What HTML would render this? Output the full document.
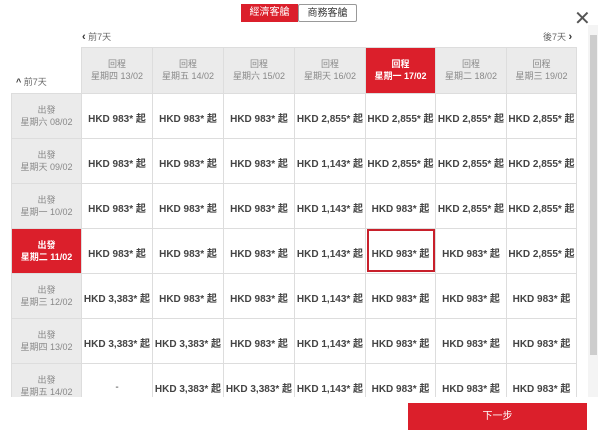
<!DOCTYPE html><html><head><meta charset="utf-8"><style>
body{margin:0;width:600px;height:441px;background:#fff;font-family:"Liberation Sans","Noto Sans CJK TC",sans-serif;position:relative;overflow:hidden;color:#333}
.tab{position:absolute;top:4px;height:18px;font-size:10px;line-height:18px;text-align:center;box-sizing:border-box}
.scroll{position:absolute;left:0;top:25px;width:588px;height:372px;overflow:hidden}
table{position:absolute;left:11px;top:22px;border-collapse:collapse;table-layout:fixed}
td{border:1px solid #ddd;height:40px;text-align:center;font-size:10px;font-weight:bold;color:#444;padding:4px 0 0;white-space:nowrap}
td.h{background:#ebebeb;font-weight:normal;color:#888;font-size:9px;line-height:12px;padding:0}
td.r{background:#db1f2b;color:#fff}
td.sel{outline:2px solid #c8202b;outline-offset:-3px}
td.e{border:none;background:transparent;padding:0}
</style></head><body>
<div class="tab" style="left:241px;width:57px;background:#db1f2b;color:#fff">經濟客艙</div>
<div class="tab" style="left:298px;width:59px;border:1px solid #999;color:#333;border-radius:2px">商務客艙</div>
<div style="position:absolute;left:574px;top:6px;font-size:20px;color:#555;font-weight:300">✕</div>
<div class="scroll">
<div style="position:absolute;left:82px;top:5px;font-size:9px;color:#666"><b style="font-size:11px;color:#333">‹</b> 前7天</div>
<div style="position:absolute;left:543px;top:5px;font-size:9px;color:#666">後7天 <b style="font-size:11px;color:#333">›</b></div>
<table>
<colgroup><col style="width:70px"><col style="width:71px"><col style="width:71px"><col style="width:71px"><col style="width:71px"><col style="width:70px"><col style="width:71px"><col style="width:70px"></colgroup>
<tr><td class="e" style="height:45px"></td><td class="h">回程<br>星期四 13/02</td><td class="h">回程<br>星期五 14/02</td><td class="h">回程<br>星期六 15/02</td><td class="h">回程<br>星期天 16/02</td><td class="h r"><b>回程<br>星期一 17/02</b></td><td class="h">回程<br>星期二 18/02</td><td class="h">回程<br>星期三 19/02</td></tr>
<tr><td class="h">出發<br>星期六 08/02</td><td>HKD 983* 起</td><td>HKD 983* 起</td><td>HKD 983* 起</td><td>HKD 2,855* 起</td><td>HKD 2,855* 起</td><td>HKD 2,855* 起</td><td>HKD 2,855* 起</td></tr>
<tr><td class="h">出發<br>星期天 09/02</td><td>HKD 983* 起</td><td>HKD 983* 起</td><td>HKD 983* 起</td><td>HKD 1,143* 起</td><td>HKD 2,855* 起</td><td>HKD 2,855* 起</td><td>HKD 2,855* 起</td></tr>
<tr><td class="h">出發<br>星期一 10/02</td><td>HKD 983* 起</td><td>HKD 983* 起</td><td>HKD 983* 起</td><td>HKD 1,143* 起</td><td>HKD 983* 起</td><td>HKD 2,855* 起</td><td>HKD 2,855* 起</td></tr>
<tr><td class="h r"><b>出發<br>星期二 11/02</b></td><td>HKD 983* 起</td><td>HKD 983* 起</td><td>HKD 983* 起</td><td>HKD 1,143* 起</td><td class="sel">HKD 983* 起</td><td>HKD 983* 起</td><td>HKD 2,855* 起</td></tr>
<tr><td class="h">出發<br>星期三 12/02</td><td>HKD 3,383* 起</td><td>HKD 983* 起</td><td>HKD 983* 起</td><td>HKD 1,143* 起</td><td>HKD 983* 起</td><td>HKD 983* 起</td><td>HKD 983* 起</td></tr>
<tr><td class="h">出發<br>星期四 13/02</td><td>HKD 3,383* 起</td><td>HKD 3,383* 起</td><td>HKD 983* 起</td><td>HKD 1,143* 起</td><td>HKD 983* 起</td><td>HKD 983* 起</td><td>HKD 983* 起</td></tr>
<tr><td class="h">出發<br>星期五 14/02</td><td style="font-weight:normal">-</td><td>HKD 3,383* 起</td><td>HKD 3,383* 起</td><td>HKD 1,143* 起</td><td>HKD 983* 起</td><td>HKD 983* 起</td><td>HKD 983* 起</td></tr>
</table>
<div style="position:absolute;left:16px;top:50px;font-size:9px;color:#666;z-index:2"><b style="color:#333">^</b> 前7天</div>
</div>
<div style="position:absolute;left:588px;top:25px;width:10px;height:372px;background:#f4f4f4"></div>
<div style="position:absolute;left:590px;top:35px;width:7px;height:320px;background:#cdcdcd"></div>
<div style="position:absolute;left:408px;top:403px;width:179px;height:27px;background:#db1f2b;color:#fff;font-size:10px;line-height:27px;text-align:center">下一步</div>
</body></html>
